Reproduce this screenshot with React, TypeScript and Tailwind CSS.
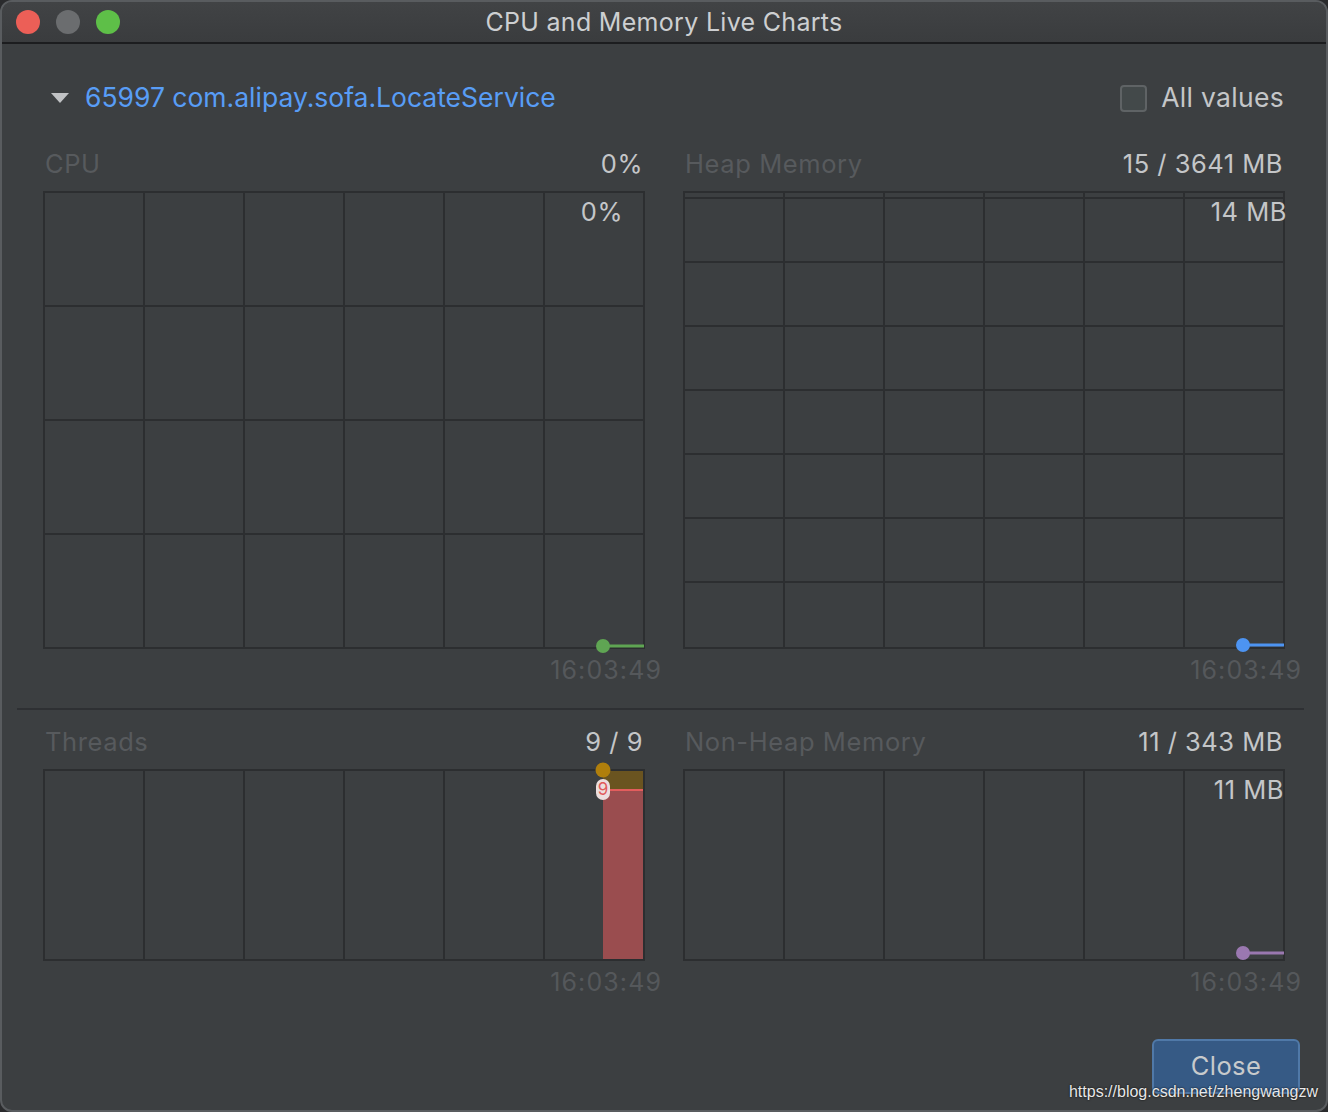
import React from "react";

type Marker = { color: string; y: number };

function GridChart({
  height,
  rows,
  marker,
  threads,
}: {
  height: number;
  rows: number[];
  marker?: Marker;
  threads?: boolean;
}) {
  const cols = [1, 101, 201, 301, 401, 501, 601];
  return (
    <svg width={602} height={height + 2} className="block overflow-visible">
      {threads ? (
        <g>
          <rect x={560} y={1} width={41} height={20} fill="#6a5420" />
          <rect x={560} y={21} width={41} height={height - 20} fill="#9a4d4f" />
          <rect x={560} y={20} width={41} height={2} fill="#e35d5d" />
        </g>
      ) : null}
      {rows.map((y) => (
        <line key={`r${y}`} x1={0} x2={602} y1={y} y2={y} stroke="#2c2e30" strokeWidth={2} />
      ))}
      {cols.map((x) => (
        <line key={`c${x}`} x1={x} x2={x} y1={0} y2={height + 2} stroke="#2c2e30" strokeWidth={2} />
      ))}
      {marker ? (
        <g>
          <line x1={560} x2={601} y1={marker.y} y2={marker.y} stroke={marker.color} strokeWidth={3} />
          <circle cx={560} cy={marker.y} r={7} fill={marker.color} />
        </g>
      ) : null}
      {threads ? <circle cx={560} cy={1} r={7.5} fill="#b07f0c" /> : null}
    </svg>
  );
}

function ChartPanel({
  title,
  value,
  inner,
  innerClass,
  height,
  rows,
  marker,
  threads,
}: {
  title: string;
  value: string;
  inner?: string;
  innerClass?: string;
  height: number;
  rows: number[];
  marker?: Marker;
  threads?: boolean;
}) {
  return (
    <div className="flex flex-col">
      <div className="flex h-[30px] items-center justify-between pl-[1px] pr-[1px]">
        <span className="text-[25.5px] tracking-[0.6px] text-[#575a5d]">{title}</span>
        <span className="text-[25.5px] tracking-[0.5px] text-[#c4c6c8]">{value}</span>
      </div>
      <div className="relative mt-[12px] -ml-[1px]">
        <GridChart height={height} rows={rows} marker={marker} threads={threads} />
        {inner ? (
          <span className={`absolute text-[25.5px] leading-[30px] tracking-[0.5px] text-[#c4c6c8] ${innerClass}`}>
            {inner}
          </span>
        ) : null}
        {threads ? (
          <span className="absolute left-[553px] top-[10px] flex h-[21px] w-[14px] items-center justify-center rounded-[7px] bg-[#ecdede] text-[17px] leading-none text-[#e05a5a]">
            9
          </span>
        ) : null}
      </div>
      <div className="-mr-[18px] mt-[7px] flex h-[30px] items-center justify-end">
        <span className="text-[25px] tracking-[1.1px] text-[#55585b]">16:03:49</span>
      </div>
    </div>
  );
}

export default function App() {
  const cpuRows = [1, 115, 229, 343, 457];
  const heapRows = [1, 7, 71, 135, 199, 263, 327, 391, 457];
  const smallRows = [1, 191];

  return (
    <div className="h-[1112px] w-[1328px] bg-[#2a2b2d] font-['Inter','Liberation_Sans',sans-serif]">
      <div className="relative flex h-[1112px] w-[1328px] flex-col overflow-hidden rounded-[12px] border-2 border-[#595c5f] bg-[#3c3f41]">
        <div className="grid h-[42px] grid-cols-[1fr_auto_1fr] items-center border-b-2 border-[#1c1d1f] bg-gradient-to-b from-[#414345] to-[#3a3c3e]">
          <div className="flex items-center gap-[16px] pl-[14px]">
            <span className="h-[24px] w-[24px] rounded-full bg-[#ec5f57]" />
            <span className="h-[24px] w-[24px] rounded-full bg-[#6b6d6f]" />
            <span className="h-[24px] w-[24px] rounded-full bg-[#5ebf48]" />
          </div>
          <div className="mt-[2px] text-[25px] tracking-[0.3px] text-[#cdcfd1]">CPU and Memory Live Charts</div>
          <div />
        </div>

        <div className="flex flex-1 flex-col px-[42px]">
          <div className="mt-[39px] flex h-[30px] items-center justify-between">
            <div className="flex items-center">
              <svg width={20} height={12} viewBox="0 0 20 12" className="ml-[6px]">
                <path d="M1 1 L19 1 L10 11 Z" fill="#c0c2c4" />
              </svg>
              <span className="ml-[15px] text-[26.5px] text-[#589df6]">65997 com.alipay.sofa.LocateService</span>
            </div>
            <div className="flex items-center">
              <span className="h-[27px] w-[27px] rounded-[4px] border-2 border-[#5f6365] bg-[#43494a]" />
              <span className="ml-[14px] text-[26.5px] tracking-[0.3px] text-[#c4c6c8]">All values</span>
            </div>
          </div>

          <div className="mt-[36px] grid grid-cols-[600px_600px] gap-x-[40px]">
            <ChartPanel
              title="CPU"
              value="0%"
              inner="0%"
              innerClass="right-[21px] top-[6px]"
              height={456}
              rows={cpuRows}
              marker={{ color: "#5fa553", y: 455 }}
            />
            <ChartPanel
              title="Heap Memory"
              value="15 / 3641 MB"
              inner="14 MB"
              innerClass="-right-[3px] top-[6px]"
              height={456}
              rows={heapRows}
              marker={{ color: "#4d94f2", y: 454 }}
            />
          </div>

          <div className="-ml-[27px] -mr-[20px] mt-[22px] h-[2px] bg-[#2e3033]" />

          <div className="mt-[17px] grid grid-cols-[600px_600px] gap-x-[40px]">
            <ChartPanel title="Threads" value="9 / 9" height={190} rows={smallRows} threads />
            <ChartPanel
              title="Non-Heap Memory"
              value="11 / 343 MB"
              inner="11 MB"
              innerClass="right-[0px] top-[6px]"
              height={190}
              rows={smallRows}
              marker={{ color: "#9a78b0", y: 184 }}
            />
          </div>

          <div className="-mr-[16px] mt-[41px] flex justify-end">
            <button className="flex h-[55px] w-[148px] items-center justify-center rounded-[6px] border-2 border-[#5079a8] bg-[#365a85] text-[25.5px] tracking-[0.4px] text-[#c8cacc]">
              Close
            </button>
          </div>
        </div>

        <span className="absolute bottom-[6px] right-[8px] font-['Liberation_Sans',sans-serif] text-[16px] text-[#e8e8e8] [text-shadow:0_0_2px_#000]">
          https://blog.csdn.net/zhengwangzw
        </span>
      </div>
    </div>
  );
}
